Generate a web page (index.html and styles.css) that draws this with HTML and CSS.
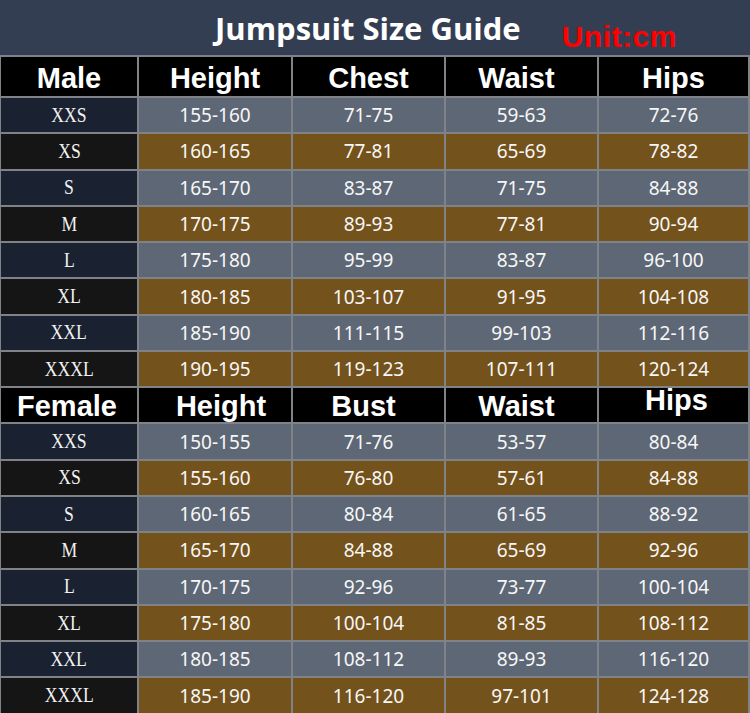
FILE: index.html
```html
<!DOCTYPE html>
<html>
<head>
<meta charset="utf-8">
<link rel="stylesheet" href="styles.css">
</head>
<body>
<div class="chart">
  <div class="title"><span class="title-text">Jumpsuit Size Guide</span><span class="unit">Unit:cm</span></div>

  <div class="hd">Male</div><div class="hd">Height</div><div class="hd">Chest</div><div class="hd hd-waist">Waist</div><div class="hd">Hips</div>

  <div class="sz odd"><span>XXS</span></div><div class="v odd">155-160</div><div class="v odd">71-75</div><div class="v odd">59-63</div><div class="v odd">72-76</div>
  <div class="sz even"><span>XS</span></div><div class="v even">160-165</div><div class="v even">77-81</div><div class="v even">65-69</div><div class="v even">78-82</div>
  <div class="sz odd"><span>S</span></div><div class="v odd">165-170</div><div class="v odd">83-87</div><div class="v odd">71-75</div><div class="v odd">84-88</div>
  <div class="sz even"><span>M</span></div><div class="v even">170-175</div><div class="v even">89-93</div><div class="v even">77-81</div><div class="v even">90-94</div>
  <div class="sz odd"><span>L</span></div><div class="v odd">175-180</div><div class="v odd">95-99</div><div class="v odd">83-87</div><div class="v odd">96-100</div>
  <div class="sz even"><span>XL</span></div><div class="v even">180-185</div><div class="v even">103-107</div><div class="v even">91-95</div><div class="v even">104-108</div>
  <div class="sz odd"><span>XXL</span></div><div class="v odd">185-190</div><div class="v odd">111-115</div><div class="v odd">99-103</div><div class="v odd">112-116</div>
  <div class="sz even"><span>XXXL</span></div><div class="v even">190-195</div><div class="v even">119-123</div><div class="v even">107-111</div><div class="v even">120-124</div>

  <div class="hd hd-f hd-female">Female</div><div class="hd hd-f hd-height2">Height</div><div class="hd hd-f hd-bust">Bust</div><div class="hd hd-f hd-waist">Waist</div><div class="hd hd-f hd-hips2">Hips</div>

  <div class="sz odd"><span>XXS</span></div><div class="v odd">150-155</div><div class="v odd">71-76</div><div class="v odd">53-57</div><div class="v odd">80-84</div>
  <div class="sz even"><span>XS</span></div><div class="v even">155-160</div><div class="v even">76-80</div><div class="v even">57-61</div><div class="v even">84-88</div>
  <div class="sz odd"><span>S</span></div><div class="v odd">160-165</div><div class="v odd">80-84</div><div class="v odd">61-65</div><div class="v odd">88-92</div>
  <div class="sz even"><span>M</span></div><div class="v even">165-170</div><div class="v even">84-88</div><div class="v even">65-69</div><div class="v even">92-96</div>
  <div class="sz odd"><span>L</span></div><div class="v odd">170-175</div><div class="v odd">92-96</div><div class="v odd">73-77</div><div class="v odd">100-104</div>
  <div class="sz even"><span>XL</span></div><div class="v even">175-180</div><div class="v even">100-104</div><div class="v even">81-85</div><div class="v even">108-112</div>
  <div class="sz odd"><span>XXL</span></div><div class="v odd">180-185</div><div class="v odd">108-112</div><div class="v odd">89-93</div><div class="v odd">116-120</div>
  <div class="sz even"><span>XXXL</span></div><div class="v even">185-190</div><div class="v even">116-120</div><div class="v even">97-101</div><div class="v even">124-128</div>
</div>
</body>
</html>
```

FILE: styles.css
```css
html, body {
  margin: 0;
  padding: 0;
  background: #34404f;
}

.chart {
  width: 750px;
  height: 713px;
  box-sizing: border-box;
  display: grid;
  grid-template-columns: 136px 152px 151px 151px 149px;
  grid-template-rows: 55px 39px repeat(8, 34.3px) 34px repeat(8, 34.3px);
  gap: 2px;
  padding: 0 2px 0 1px;
  background: #7f8388;
  overflow: hidden;
}

.title {
  grid-column: 1 / -1;
  margin: 0 -2px 0 -1px;
  background: #333e52;
  display: flex;
  align-items: center;
  padding-left: 215px;
}

.title-text {
  font-family: "Open Sans", "Liberation Sans", sans-serif;
  font-weight: 700;
  font-size: 31px;
  color: #ffffff;
  margin-top: 1px;
}

.unit {
  font-family: "Liberation Sans", Arial, sans-serif;
  font-weight: 700;
  font-size: 30px;
  letter-spacing: 0.5px;
  color: #ff0000;
  margin-left: 41px;
  margin-top: 18px;
}

.hd {
  background: #000000;
  color: #ffffff;
  font-family: "Liberation Sans", Arial, sans-serif;
  font-weight: 700;
  font-size: 29px;
  display: flex;
  align-items: center;
  justify-content: center;
  padding-top: 4px;
}

.hd-waist {
  padding-right: 10px;
}

.hd-f {
  padding-top: 2px;
}

.hd-female {
  padding-right: 4px;
}

.hd-height2 {
  padding-left: 12px;
}

.hd-bust {
  padding-right: 10px;
}

.hd-hips2 {
  padding-top: 0;
  padding-bottom: 10px;
  padding-left: 6px;
}

.sz {
  display: flex;
  align-items: center;
  justify-content: center;
  color: #f2f2f2;
  font-family: "Liberation Serif", "Times New Roman", serif;
  font-size: 21px;
}

.sz span {
  display: inline-block;
  transform: scaleX(0.84);
}

.sz.odd {
  background: #1a2130;
}

.sz.even {
  background: #151515;
}

.v {
  display: flex;
  align-items: center;
  justify-content: center;
  color: #f7f7f7;
  font-family: "Noto Sans", "Open Sans", sans-serif;
  font-size: 19px;
}

.v.odd {
  background: #5e6775;
}

.v.even {
  background: #74521c;
}
```
